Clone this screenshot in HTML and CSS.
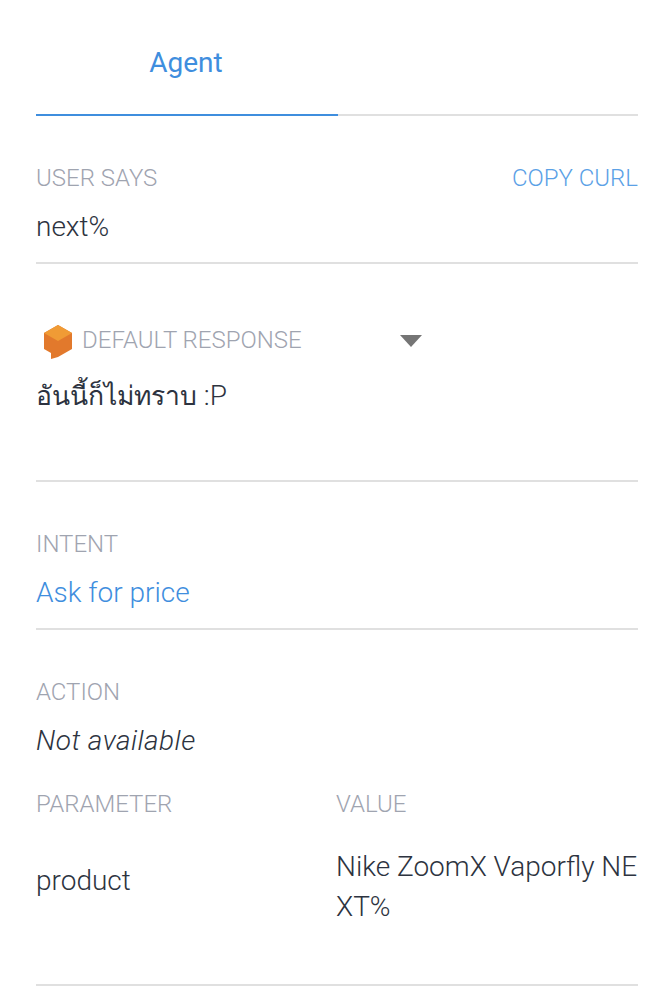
FILE: index.html
```html
<!DOCTYPE html>
<html lang="en">
<head>
<meta charset="utf-8">
<title>Agent</title>
<link rel="stylesheet" href="styles.css">
</head>
<body>
<main class="panel">
  <nav class="tabs"><div class="tab">Agent</div></nav>
  <section class="says">
    <div class="row-head"><span class="label">USER SAYS</span><span class="copy">COPY CURL</span></div>
    <div class="value">next%</div>
  </section>
  <section class="response">
    <div class="resp-head">
      <svg class="cube" viewBox="0 0 28 34" width="28" height="34"><path d="M14 0 L28 8 V24 L14 32 L7 34 V28 L0 24 V8 Z" fill="#e2792c"/><path d="M14 0 L28 8 L14 16 L0 8 Z" fill="#f09b35"/></svg>
      <span class="label">DEFAULT RESPONSE</span>
      <span class="caret"></span>
    </div>
    <div class="value thai"><b class="thai-text">อันนี้ก็ไม่ทราบ</b> :P</div>
  </section>
  <section class="intent">
    <div class="label">INTENT</div>
    <div class="value link">Ask for price</div>
  </section>
  <section class="action">
    <div class="label">ACTION</div>
    <div class="value na">Not available</div>
    <div class="params">
      <div class="label">PARAMETER</div><div class="label">VALUE</div>
      <div class="value pname">product</div><div class="value pval">Nike ZoomX Vaporfly NEXT%</div>
    </div>
  </section>
</main>
</body>
</html>
```
FILE: styles.css
```css
* { box-sizing: border-box; }
body { margin: 0; background: #fff; font-family: Roboto, "Noto Sans", sans-serif; font-weight: 300; color: #2d3340; }
.panel { padding: 0 30px 0 36px; }
.tabs { height: 116px; border-bottom: 2px solid #e0e0e0; }
.tab { width: 302px; height: 116px; border-bottom: 2px solid #3f8ede; color: #3f8ede; font-size: 28px; font-weight: 400; text-align: center; padding: 45px 2px 0 0; line-height: 36px; }
.label { font-size: 24px; line-height: 32px; color: #9fa4b0; font-weight: 300; }
.value { font-size: 28px; line-height: 36px; }
.row-head { display: flex; justify-content: space-between; }
.copy { font-size: 24px; line-height: 32px; color: #5ba1e6; font-weight: 300; }
.says { height: 148px; padding-top: 46px; border-bottom: 2px solid #e0e0e0; }
.says .value { margin-top: 15px; }
.response { height: 218px; padding-top: 58px; border-bottom: 2px solid #e0e0e0; }
.resp-head { display: flex; align-items: center; height: 36px; padding-left: 8px; position: relative; }
.cube { margin: 4px 10px 0 0; flex: none; }
.caret { position: absolute; left: 364px; top: 13px; width: 0; height: 0; border-left: 11px solid transparent; border-right: 11px solid transparent; border-top: 12px solid #757575; }
.thai { margin-top: 20px; }
.thai-text { font-size: 26.5px; }
.intent { height: 148px; padding-top: 46px; border-bottom: 2px solid #e0e0e0; }
.intent .value { margin-top: 15px; }
.link { color: #3f8ede; }
.action { height: 356px; padding-top: 46px; border-bottom: 2px solid #e0e0e0; }
.action > .value { margin-top: 15px; }
.na { font-style: italic; letter-spacing: 0.45px; }
.params { display: grid; grid-template-columns: 300px 302px; margin-top: 29px; align-items: center; }
.pval { margin-top: 27px; word-break: break-all; line-height: 40px; }
.pname { margin-top: 15px; }
```
